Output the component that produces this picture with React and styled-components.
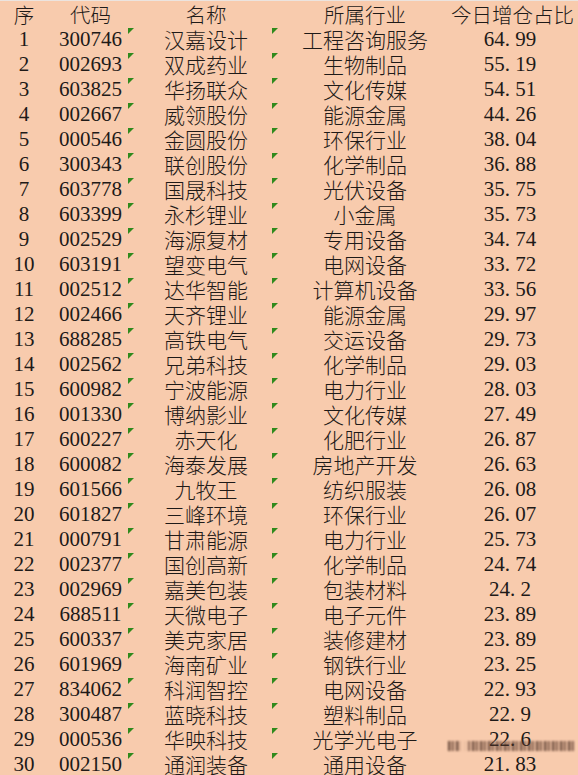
import React from 'react'
import styled, { createGlobalStyle } from 'styled-components'

const rows = [
  ['1', '300746', '汉嘉设计', '工程咨询服务', '64.99'],
  ['2', '002693', '双成药业', '生物制品', '55.19'],
  ['3', '603825', '华扬联众', '文化传媒', '54.51'],
  ['4', '002667', '威领股份', '能源金属', '44.26'],
  ['5', '000546', '金圆股份', '环保行业', '38.04'],
  ['6', '300343', '联创股份', '化学制品', '36.88'],
  ['7', '603778', '国晟科技', '光伏设备', '35.75'],
  ['8', '603399', '永杉锂业', '小金属', '35.73'],
  ['9', '002529', '海源复材', '专用设备', '34.74'],
  ['10', '603191', '望变电气', '电网设备', '33.72'],
  ['11', '002512', '达华智能', '计算机设备', '33.56'],
  ['12', '002466', '天齐锂业', '能源金属', '29.97'],
  ['13', '688285', '高铁电气', '交运设备', '29.73'],
  ['14', '002562', '兄弟科技', '化学制品', '29.03'],
  ['15', '600982', '宁波能源', '电力行业', '28.03'],
  ['16', '001330', '博纳影业', '文化传媒', '27.49'],
  ['17', '600227', '赤天化', '化肥行业', '26.87'],
  ['18', '600082', '海泰发展', '房地产开发', '26.63'],
  ['19', '601566', '九牧王', '纺织服装', '26.08'],
  ['20', '601827', '三峰环境', '环保行业', '26.07'],
  ['21', '000791', '甘肃能源', '电力行业', '25.73'],
  ['22', '002377', '国创高新', '化学制品', '24.74'],
  ['23', '002969', '嘉美包装', '包装材料', '24.2'],
  ['24', '688511', '天微电子', '电子元件', '23.89'],
  ['25', '600337', '美克家居', '装修建材', '23.89'],
  ['26', '601969', '海南矿业', '钢铁行业', '23.25'],
  ['27', '834062', '科润智控', '电网设备', '22.93'],
  ['28', '300487', '蓝晓科技', '塑料制品', '22.9'],
  ['29', '000536', '华映科技', '光学光电子', '22.6'],
  ['30', '002150', '通润装备', '通用设备', '21.83']
]

const GlobalStyle = createGlobalStyle`
  html, body {
    margin: 0;
    padding: 0;
    background: #f8cbad;
  }
  body {
    width: 578px;
    height: 775px;
    overflow: hidden;
  }
`

const Sheet = styled.div`
  position: relative;
  width: 578px;
  height: 775px;
  box-sizing: border-box;
  padding-top: 1px;
  border-top: 1px solid #ece4df;
  background: #f8cbad;
  color: #1e1a18;
  overflow: hidden;
`

const Row = styled.div`
  position: relative;
  display: grid;
  grid-template-columns: 48px 85px 146px 172px 118px;
  height: 25px;
  line-height: 25px;
`

const Cell = styled.div`
  text-align: center;
  white-space: nowrap;
  font-size: ${p => (p.$head ? 20.5 : 21)}px;
  font-family: ${p =>
    p.$num
      ? '"Liberation Serif", "Noto Sans CJK SC", serif'
      : '"Noto Sans CJK SC", "Noto Sans", sans-serif'};
  font-weight: ${p => (p.$num ? 400 : 300)};
`

const Dot = styled.span`
  display: inline-block;
  width: 0.5em;
  text-align: left;
`

// Excel "number stored as text" marker
const Flag = styled.span`
  position: absolute;
  top: 1px;
  left: ${p => p.$x}px;
  width: 0;
  height: 0;
  border-top: 6px solid #2f8a1c;
  border-right: 6px solid transparent;
`

// blurred watermark strip over the bottom-right cells
const Watermark = styled.div`
  position: absolute;
  left: 448px;
  top: 740px;
  width: 126px;
  height: 10px;
  background:
    linear-gradient(90deg, transparent 0 12px, rgba(248, 203, 173, 0.9) 12px 20px, transparent 20px 100%),
    repeating-linear-gradient(
      90deg,
      rgba(60, 35, 25, 0.75) 0 2px,
      rgba(120, 80, 60, 0.35) 2px 4px,
      rgba(70, 40, 30, 0.6) 4px 6px,
      rgba(200, 150, 120, 0.2) 6px 8px
    );
  filter: blur(1px);
`

const Percent = ({ value }) => {
  const [a, b] = value.split('.')
  return (
    <>
      {a}
      {b !== undefined && (
        <>
          <Dot>.</Dot>
          {b}
        </>
      )}
    </>
  )
}

const App = () => (
  <>
    <GlobalStyle />
    <Sheet>
      <Row>
        <Cell $head>序</Cell>
        <Cell $head>代码</Cell>
        <Cell $head>名称</Cell>
        <Cell $head>所属行业</Cell>
        <Cell $head>今日增仓占比</Cell>
      </Row>
      {rows.map(([n, code, name, industry, pct]) => (
        <Row key={n}>
          <Cell $num>{n}</Cell>
          <Cell $num>{code}</Cell>
          <Cell>{name}</Cell>
          <Cell>{industry}</Cell>
          <Cell $num>
            <Percent value={pct} />
          </Cell>
          <Flag $x={128} />
          <Flag $x={272} />
        </Row>
      ))}
      <Watermark />
    </Sheet>
  </>
)

export default App
